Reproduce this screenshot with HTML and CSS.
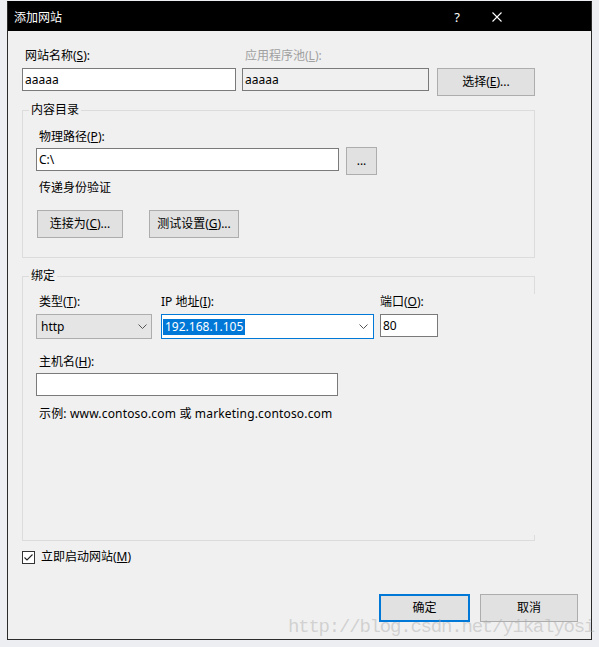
FILE: index.html
```html
<!DOCTYPE html>
<html lang="zh-CN">
<head>
<meta charset="utf-8">
<title>添加网站</title>
<link rel="stylesheet" href="styles.css">
</head>
<body>
<div class="dialog">
  <div class="titlebar">
    <span class="title">添加网站</span>
    <span class="help">?</span>
    <span class="close">
      <svg width="10" height="10" viewBox="0 0 10 10"><path d="M0.5 0.5 L9.5 9.5 M9.5 0.5 L0.5 9.5" stroke="#fff" stroke-width="1.1" fill="none"/></svg>
    </span>
  </div>
  <div class="body">
    <div class="top-row">
      <div class="field f-name">
        <div class="lbl">网站名称(<u>S</u>):</div>
        <div class="input">aaaaa</div>
      </div>
      <div class="field f-pool">
        <div class="lbl dis">应用程序池(<u>L</u>):</div>
        <div class="input disabled">aaaaa</div>
      </div>
      <div class="btn btn-select">选择(<u>E</u>)...</div>
    </div>

    <div class="group g1">
      <div class="legend">内容目录</div>
      <div class="lbl path-label">物理路径(<u>P</u>):</div>
      <div class="path-row">
        <div class="input path-input">C:\</div>
        <div class="btn btn-dots">...</div>
      </div>
      <div class="lbl auth-label">传递身份验证</div>
      <div class="auth-row">
        <div class="btn btn-connect">连接为(<u>C</u>)...</div>
        <div class="btn btn-test">测试设置(<u>G</u>)...</div>
      </div>
    </div>

    <div class="group g2">
      <div class="legend">绑定</div>
      <div class="bind-row">
        <div class="field col-type">
          <div class="lbl">类型(<u>T</u>):</div>
          <div class="combo combo-type">
            <span class="combo-text">http</span>
            <svg class="chev" width="9" height="5" viewBox="0 0 9 5"><polyline points="0.5,0.5 4.5,4.5 8.5,0.5" stroke="#555" stroke-width="1" fill="none"/></svg>
          </div>
        </div>
        <div class="field col-ip">
          <div class="lbl">IP 地址(<u>I</u>):</div>
          <div class="combo combo-ip">
            <span class="sel-text">192.168.1.105</span>
            <svg class="chev" width="9" height="5" viewBox="0 0 9 5"><polyline points="0.5,0.5 4.5,4.5 8.5,0.5" stroke="#555" stroke-width="1" fill="none"/></svg>
          </div>
        </div>
        <div class="field col-port">
          <div class="lbl">端口(<u>O</u>):</div>
          <div class="input port-input">80</div>
        </div>
      </div>
      <div class="lbl host-label">主机名(<u>H</u>):</div>
      <div class="input host-input"></div>
      <div class="lbl example">示例: www.contoso.com 或 marketing.contoso.com</div>
    </div>

    <div class="check-row">
      <span class="checkbox">
        <svg width="11" height="11" viewBox="0 0 11 11"><polyline points="1.5,5.5 4,8 9.5,2.5" stroke="#222" stroke-width="1.1" fill="none"/></svg>
      </span>
      <span class="check-label">立即启动网站(<u>M</u>)</span>
    </div>

    <div class="footer">
      <div class="btn btn-ok">确定</div>
      <div class="btn btn-cancel">取消</div>
    </div>
  </div>
</div>
<div class="watermark">http://blog.csdn.net/yikalyosi</div>
</body>
</html>
```

FILE: styles.css
```css
* { box-sizing: border-box; }

html, body {
  margin: 0;
  padding: 0;
}

body {
  width: 599px;
  height: 647px;
  overflow: hidden;
  position: relative;
  background: #eceef1;
  font-family: "Noto Sans", "Noto Sans CJK SC", sans-serif;
  font-size: 12px;
  line-height: 16px;
  color: #000;
}

u { text-decoration: underline; text-underline-offset: 1px; }

.dialog {
  margin: 1px 0 0 7px;
  width: 585px;
  height: 639px;
  border: 1px solid #2b2b2b;
  border-top-color: #000;
  background: #f0f0f0;
  display: flex;
  flex-direction: column;
}

.titlebar {
  height: 29px;
  background: #000;
  color: #fff;
  display: flex;
  align-items: center;
  padding: 0 84px 0 6px;
  font-family: "Noto Sans CJK SC", sans-serif;
}

.title { flex: 1; }

.help {
  width: 16px;
  text-align: center;
  font-family: "Noto Sans", sans-serif;
  font-size: 13px;
}

.close {
  width: 20px;
  margin-left: 22px;
  display: flex;
  justify-content: center;
  align-items: center;
}

.body {
  flex: 1;
  display: flex;
  flex-direction: column;
  padding: 17px 13px 0 14px;
}

.top-row {
  display: flex;
  align-items: flex-start;
}

.field {
  display: flex;
  flex-direction: column;
}

.lbl {
  height: 16px;
  padding-left: 3px;
  white-space: nowrap;
}

.field .lbl { margin-bottom: 4px; }

.dis { color: #a0a0a0; }

.input {
  height: 23px;
  border: 1px solid #7a7a7a;
  background: #fff;
  padding-left: 2px;
  line-height: 21px;
  white-space: nowrap;
}

.input.disabled { background: #f0f0f0; }

.f-name { width: 214px; }
.f-pool { width: 187px; margin-left: 6px; }

.btn {
  height: 28px;
  border: 1px solid #adadad;
  background: #e1e1e1;
  display: flex;
  align-items: center;
  justify-content: center;
  white-space: nowrap;
}

.btn-select { width: 98px; margin-left: 8px; margin-top: 20px; }

.group {
  position: relative;
  width: 513px;
  border: 1px solid #dcdcdc;
}

.legend {
  position: absolute;
  top: -9px;
  left: 6px;
  padding: 0 2px;
  background: #f0f0f0;
  line-height: 16px;
}

.g1 {
  margin-top: 14px;
  padding: 18px 0 19px 13px;
}

.path-label { margin-bottom: 2px; }

.path-row {
  display: flex;
  align-items: flex-start;
}

.path-input { width: 303px; margin-top: 1px; }

.btn-dots { width: 31px; margin-left: 7px; }

.auth-label { margin-top: 5px; }

.auth-row {
  display: flex;
  gap: 26px;
  margin-top: 14px;
  padding-left: 1px;
}

.btn-connect { width: 86px; }
.btn-test { width: 90px; }

.g2 {
  margin-top: 18px;
  padding: 17px 0 118px 13px;
  border-right-color: transparent;
}

.g2::before,
.g2::after {
  content: "";
  position: absolute;
  right: -1px;
  width: 1px;
  background: #dcdcdc;
}

.g2::before { top: -1px; height: 18px; }
.g2::after { bottom: -1px; height: 6px; }

.bind-row { display: flex; }

.col-type { width: 116px; }
.col-ip { width: 213px; margin-left: 9px; }
.col-port { width: 58px; margin-left: 6px; }

.col-ip .lbl,
.col-port .lbl { padding-left: 0; }

.combo {
  height: 25px;
  display: flex;
  align-items: center;
  justify-content: space-between;
}

.combo-type {
  border: 1px solid #adadad;
  background: #e5e5e5;
  padding: 0 4px 0 4px;
}

.combo-ip {
  border: 1px solid #0078d7;
  background: #fff;
  padding: 0 5px 0 1px;
}

.sel-text {
  background: #0078d7;
  color: #fff;
  line-height: 16px;
  padding: 0 2px 0 2px;
}

.port-input { width: 58px; }

.host-label { margin-top: 15px; }
.host-input { width: 302px; margin-top: 3px; }
.example { margin-top: 10px; letter-spacing: 0.17px; }

.check-row {
  display: flex;
  align-items: center;
  margin-top: 8px;
}

.checkbox {
  width: 13px;
  height: 13px;
  border: 1px solid #333;
  background: #fff;
  display: flex;
  align-items: center;
  justify-content: center;
}

.check-label { margin-left: 6px; }

.footer {
  display: flex;
  justify-content: flex-end;
  gap: 10px;
  margin-top: 29px;
}

.btn-ok { width: 91px; border: 2px solid #0078d7; }
.btn-cancel { width: 98px; }

.watermark {
  position: absolute;
  left: 288px;
  top: 619px;
  font-family: "Liberation Mono", monospace;
  font-size: 19px;
  letter-spacing: -1.2px;
  line-height: 16px;
  color: rgba(170, 170, 170, 0.45);
  white-space: nowrap;
}
```
